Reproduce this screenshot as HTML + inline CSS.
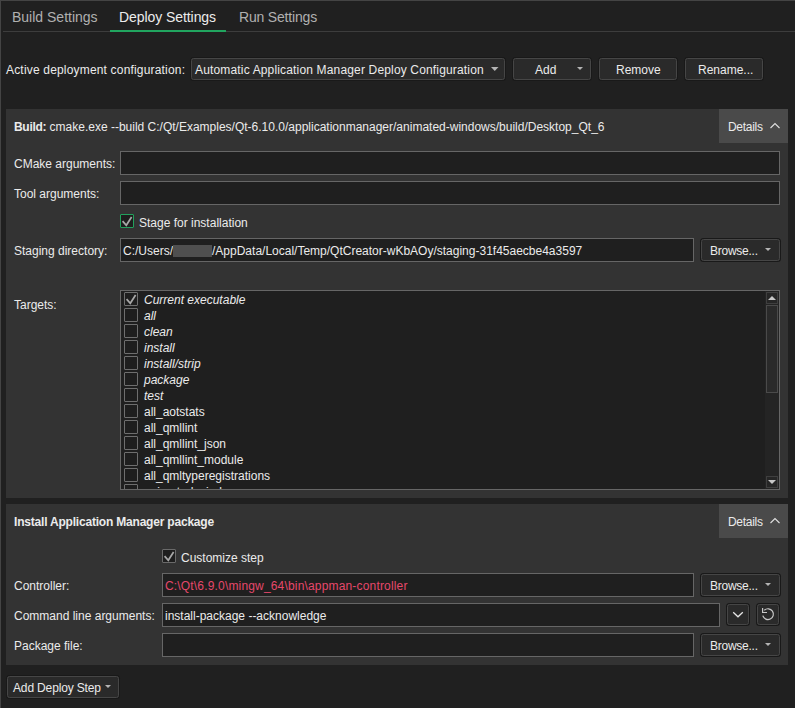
<!DOCTYPE html>
<html><head><meta charset="utf-8">
<style>
*{box-sizing:border-box;margin:0;padding:0}
html,body{width:795px;height:708px;overflow:hidden;background:#202020}
body{position:relative;font-family:"Liberation Sans",sans-serif;font-size:12px;color:#ebebeb}
.a{position:absolute;white-space:nowrap}
.t{position:absolute;white-space:nowrap;line-height:14px}
.btn{position:absolute;background:#2a2a2a;border:1px solid #464646;border-radius:2.5px;box-shadow:0 0 0 1px #191919}
.inp{position:absolute;background:#1f1f1f;border:1px solid #666}
.sec{position:absolute;background:#333333}
.det{position:absolute;background:#4a4a4a}
.cb{position:absolute;width:14px;height:14px;border:1px solid #6a6a6a;background:#1e1e1e;border-radius:1px}
.arr{position:absolute;width:0;height:0;border-left:3.5px solid transparent;border-right:3.5px solid transparent;border-top:3px solid #a8a8a8}
</style></head><body>
<!-- frame borders -->
<div class="a" style="left:0;top:0;width:795px;height:1px;background:#444"></div>
<div class="a" style="left:0;top:0;width:1px;height:708px;background:#444"></div>

<!-- tabs -->
<div class="t" style="left:12px;top:9px;font-size:14px;line-height:16px;color:#b0b0b0">Build Settings</div>
<div class="t" style="left:119px;top:9px;font-size:14px;line-height:16px;color:#ececec;letter-spacing:-0.07px">Deploy Settings</div>
<div class="t" style="left:239px;top:9px;font-size:14px;line-height:16px;color:#b0b0b0;letter-spacing:-0.18px">Run Settings</div>
<div class="a" style="left:3px;top:31px;width:792px;height:1px;background:#3d3d3d"></div>
<div class="a" style="left:110px;top:30px;width:116px;height:2px;background:#21a55f"></div>

<!-- config row -->
<div class="t" style="left:6px;top:63px;letter-spacing:0.18px">Active deployment configuration:</div>
<div class="btn" style="left:191px;top:58px;width:314px;height:22px"></div>
<div class="t" style="left:195px;top:63px;letter-spacing:0.16px">Automatic Application Manager Deploy Configuration</div>
<svg class="a" style="left:490.5px;top:67px" width="8" height="4"><path d="M0 0 H7.5 L3.75 4 Z" fill="#b4b4b4"/></svg>
<div class="btn" style="left:513px;top:58px;width:78px;height:22px"></div>
<div class="t" style="left:535px;top:63px">Add</div>
<svg class="a" style="left:577px;top:67px" width="6" height="3"><path d="M0 0 H6 L3.0 3 Z" fill="#b4b4b4"/></svg>
<div class="btn" style="left:599px;top:58px;width:78px;height:22px"></div>
<div class="t" style="left:616px;top:63px">Remove</div>
<div class="btn" style="left:685px;top:58px;width:78px;height:22px"></div>
<div class="t" style="left:698px;top:63px">Rename...</div>

<!-- section 1 -->
<div class="sec" style="left:6px;top:109px;width:782px;height:389px"></div>
<div class="t" style="left:14px;top:120px;width:700px;overflow:hidden"><b style="letter-spacing:-0.3px">Build:</b> cmake.exe --build C:/Qt/Examples/Qt-6.10.0/applicationmanager/animated-windows/build/Desktop_Qt_6</div>
<div class="det" style="left:719px;top:109px;width:69px;height:34px"></div>
<div class="t" style="left:728px;top:120px;letter-spacing:-0.3px">Details</div>
<svg class="a" style="left:769px;top:122px" width="12" height="8"><path d="M1.5 6 L6 1.5 L10.5 6" fill="none" stroke="#e0e0e0" stroke-width="1.1"/></svg>

<div class="t" style="left:14px;top:157px">CMake arguments:</div>
<div class="inp" style="left:120px;top:151px;width:660px;height:24px"></div>
<div class="t" style="left:14px;top:187px">Tool arguments:</div>
<div class="inp" style="left:120px;top:181px;width:660px;height:24px"></div>

<div class="cb" style="left:120px;top:214px;border-color:#22a15c"></div>
<svg class="a" style="left:120px;top:214px" width="14" height="14"><path d="M2.6 7.1 L6.3 11.3 L11.6 3" fill="none" stroke="#a8a8a8" stroke-width="1.7"/></svg>
<div class="t" style="left:139px;top:216px">Stage for installation</div>

<div class="t" style="left:14px;top:244px">Staging directory:</div>
<div class="inp" style="left:120px;top:238px;width:574px;height:24px"></div>
<div class="t" style="left:123px;top:244px">C:/Users/<span style="display:inline-block;width:39px;height:12px;background:#4f4f4f;vertical-align:-2px"></span>/AppData/Local/Temp/QtCreator-wKbAOy/staging-31f45aecbe4a3597</div>
<div class="btn" style="left:701px;top:239px;width:79px;height:22px"></div>
<div class="t" style="left:710px;top:244px;letter-spacing:-0.25px">Browse...</div>
<svg class="a" style="left:765px;top:248px" width="6" height="3"><path d="M0 0 H6 L3.0 3 Z" fill="#b4b4b4"/></svg>

<div class="t" style="left:14px;top:298px">Targets:</div>
<div class="inp" style="left:120px;top:290px;width:660px;height:200px;overflow:hidden" id="list"><div class="cb" style="left:3px;top:1px;border-color:#6e6e6e"></div>
<svg class="a" style="left:3px;top:1px" width="14" height="14"><path d="M2.6 7.1 L6.3 11.3 L11.6 3" fill="none" stroke="#a8a8a8" stroke-width="1.7"/></svg>
<div class="t" style="left:23px;top:2px;font-style:italic;">Current executable</div>
<div class="cb" style="left:3px;top:17px;border-color:#6e6e6e"></div>
<div class="t" style="left:23px;top:18px;font-style:italic;">all</div>
<div class="cb" style="left:3px;top:33px;border-color:#6e6e6e"></div>
<div class="t" style="left:23px;top:34px;font-style:italic;">clean</div>
<div class="cb" style="left:3px;top:49px;border-color:#6e6e6e"></div>
<div class="t" style="left:23px;top:50px;font-style:italic;">install</div>
<div class="cb" style="left:3px;top:65px;border-color:#6e6e6e"></div>
<div class="t" style="left:23px;top:66px;font-style:italic;">install/strip</div>
<div class="cb" style="left:3px;top:81px;border-color:#6e6e6e"></div>
<div class="t" style="left:23px;top:82px;font-style:italic;">package</div>
<div class="cb" style="left:3px;top:97px;border-color:#6e6e6e"></div>
<div class="t" style="left:23px;top:98px;font-style:italic;">test</div>
<div class="cb" style="left:3px;top:113px;border-color:#6e6e6e"></div>
<div class="t" style="left:23px;top:114px;">all_aotstats</div>
<div class="cb" style="left:3px;top:129px;border-color:#6e6e6e"></div>
<div class="t" style="left:23px;top:130px;">all_qmllint</div>
<div class="cb" style="left:3px;top:145px;border-color:#6e6e6e"></div>
<div class="t" style="left:23px;top:146px;">all_qmllint_json</div>
<div class="cb" style="left:3px;top:161px;border-color:#6e6e6e"></div>
<div class="t" style="left:23px;top:162px;">all_qmllint_module</div>
<div class="cb" style="left:3px;top:177px;border-color:#6e6e6e"></div>
<div class="t" style="left:23px;top:178px;">all_qmltyperegistrations</div>
<div class="cb" style="left:3px;top:193px;border-color:#6e6e6e"></div>
<div class="t" style="left:23px;top:194px;">animated-windows</div>
<div class="a" style="left:644px;top:0px;width:14px;height:198px;background:#242424"></div>
<div class="a" style="left:645px;top:1px;width:12px;height:12px;border:1px solid #3f3f3f;background:#262626"></div>
<div class="a" style="left:647px;top:5px;width:0;height:0;border-left:4px solid transparent;border-right:4px solid transparent;border-bottom:4px solid #c8c8c8"></div>
<div class="a" style="left:645px;top:14px;width:12px;height:88px;border:1px solid #4a4a4a;background:#2a2a2a"></div>
<div class="a" style="left:645px;top:185px;width:12px;height:12px;border:1px solid #3f3f3f;background:#262626"></div>
<div class="a" style="left:647px;top:189px;width:0;height:0;border-left:4px solid transparent;border-right:4px solid transparent;border-top:4px solid #c8c8c8"></div>
</div>

<!-- section 2 -->
<div class="sec" style="left:6px;top:504px;width:782px;height:161px"></div>
<div class="t" style="left:14px;top:515px"><b style="letter-spacing:-0.2px">Install Application Manager package</b></div>
<div class="det" style="left:719px;top:504px;width:69px;height:34px"></div>
<div class="t" style="left:728px;top:515px;letter-spacing:-0.3px">Details</div>
<svg class="a" style="left:769px;top:517px" width="12" height="8"><path d="M1.5 6 L6 1.5 L10.5 6" fill="none" stroke="#e0e0e0" stroke-width="1.1"/></svg>

<div class="cb" style="left:162px;top:549px"></div>
<svg class="a" style="left:162px;top:549px" width="14" height="14"><path d="M2.6 7.1 L6.3 11.3 L11.6 3" fill="none" stroke="#a8a8a8" stroke-width="1.7"/></svg>
<div class="t" style="left:181px;top:551px">Customize step</div>

<div class="t" style="left:14px;top:579px">Controller:</div>
<div class="inp" style="left:162px;top:573px;width:532px;height:24px"></div>
<div class="t" style="left:165px;top:579px;color:#e5486b;letter-spacing:0.17px">C:\Qt\6.9.0\mingw_64\bin\appman-controller</div>
<div class="btn" style="left:701px;top:574px;width:79px;height:22px"></div>
<div class="t" style="left:710px;top:579px;letter-spacing:-0.25px">Browse...</div>
<svg class="a" style="left:765px;top:583px" width="6" height="3"><path d="M0 0 H6 L3.0 3 Z" fill="#b4b4b4"/></svg>

<div class="t" style="left:14px;top:609px">Command line arguments:</div>
<div class="inp" style="left:162px;top:603px;width:558px;height:24px"></div>
<div class="t" style="left:165px;top:609px">install-package --acknowledge</div>
<div class="btn" style="left:727px;top:604px;width:22px;height:21px"></div>
<svg class="a" style="left:727px;top:604px" width="22" height="21"><path d="M6.2 8.3 L11 12.8 L15.8 8.3" fill="none" stroke="#e6e6e6" stroke-width="1.3"/></svg>
<div class="btn" style="left:757px;top:604px;width:22px;height:21px"></div>
<svg class="a" style="left:757px;top:604px" width="22" height="21"><path d="M5.8 11.7 A5.4 5.4 0 1 0 7.3 6.2" fill="none" stroke="#c8c8c8" stroke-width="1.2"/><path d="M5.6 4 L5.6 8.5 L10 8.5" fill="none" stroke="#c8c8c8" stroke-width="1.2"/></svg>

<div class="t" style="left:14px;top:639px">Package file:</div>
<div class="inp" style="left:162px;top:633px;width:532px;height:24px"></div>
<div class="btn" style="left:701px;top:634px;width:79px;height:22px"></div>
<div class="t" style="left:710px;top:639px;letter-spacing:-0.25px">Browse...</div>
<svg class="a" style="left:765px;top:643px" width="6" height="3"><path d="M0 0 H6 L3.0 3 Z" fill="#b4b4b4"/></svg>

<!-- bottom -->
<div class="btn" style="left:7px;top:676px;width:112px;height:22px"></div>
<div class="t" style="left:13px;top:681px;letter-spacing:-0.15px">Add Deploy Step</div>
<svg class="a" style="left:105px;top:685px" width="6" height="3"><path d="M0 0 H6 L3.0 3 Z" fill="#b4b4b4"/></svg>
</body></html>
